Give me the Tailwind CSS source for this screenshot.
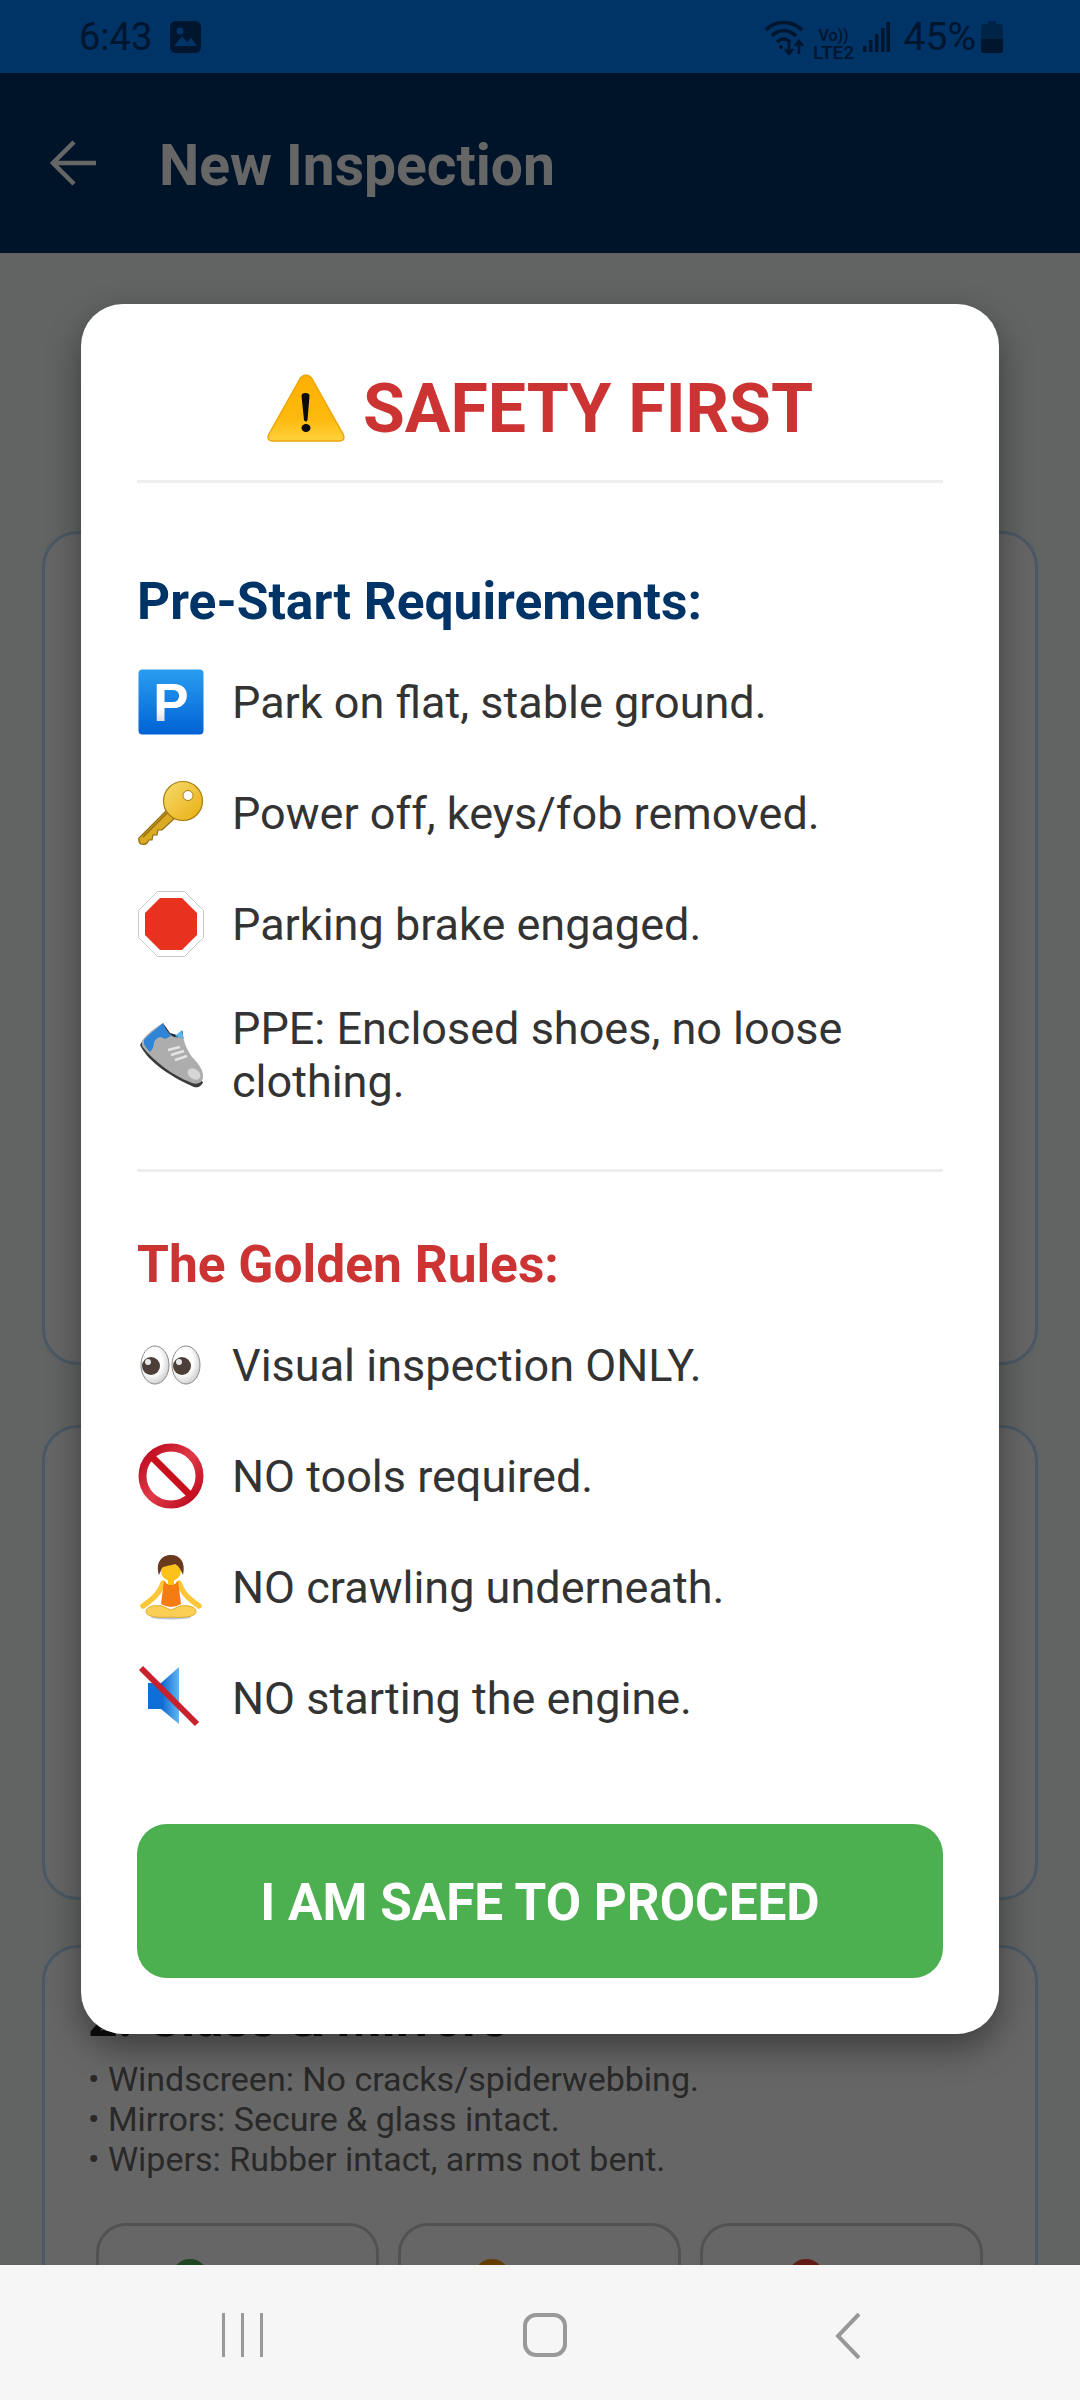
<!DOCTYPE html>
<html lang="en">
<head>
    <meta charset="UTF-8">
    <meta name="viewport" content="width=device-width, initial-scale=1.0">
    <title>New Inspection</title>
    <script src="https://cdn.jsdelivr.net/npm/@tailwindcss/browser@4"></script>
</head>
<body class="bg-[#f6f7f8] font-[Roboto,sans-serif]">
<div class="relative w-[1080px] h-[2400px] overflow-hidden flex flex-col">

    <!-- status bar -->
    <div class="h-[73px] bg-[#003366] flex items-center justify-between pl-[79px] pr-[77px] text-[#00152e] shrink-0">
        <div class="flex items-center gap-[18px]">
            <span class="text-[38px] leading-[44px]">6:43</span>
            <svg width="31" height="32" viewBox="0 0 31 32"><rect x="0" y="0" width="31" height="32" rx="6" fill="#00152e"/><circle cx="10" cy="10" r="3.5" fill="#003366"/><path d="M4 25 L12 15 L17 21 L21 17 L27 25 Z" fill="#003366"/></svg>
        </div>
        <div class="flex items-center">
            <svg width="40" height="36" viewBox="0 0 40 36" fill="none" stroke="#00152e" stroke-width="3.5"><path d="M2 11 C11 1 28 1 38 11"/><path d="M8 17 C14 10 25 10 32 17"/><path d="M13 23 C17 19 22 19 26 23"/><circle cx="17" cy="28" r="2" fill="#00152e" stroke="none"/><path d="M25 22 V35 M21 30 L25 35 L29 30" stroke-width="2.5"/><path d="M35 35 V23 M31 27 L35 22 L39 27" stroke-width="2.5"/></svg>
            <div class="ml-[9px] w-[42px] pt-[16px] flex flex-col items-center font-medium">
                <span class="text-[16px] leading-[17px]">Vo))</span>
                <span class="text-[19px] leading-[18px]">LTE2</span>
            </div>
            <svg class="ml-[8px]" width="27" height="30" viewBox="0 0 27 30" fill="#00152e"><rect x="0" y="24" width="3.5" height="6"/><rect x="6" y="18" width="3.5" height="12"/><rect x="12" y="12" width="3.5" height="18"/><rect x="18" y="6" width="3.5" height="24"/><rect x="23.5" y="0" width="3.5" height="30"/></svg>
            <span class="ml-[14px] text-[39px] leading-[44px]">45%</span>
            <svg class="ml-[5px]" width="22" height="32" viewBox="0 0 22 32"><path d="M7 0 H15 V3 H19 Q22 3 22 6 V29 Q22 32 19 32 H3 Q0 32 0 29 V6 Q0 3 3 3 H7 Z" fill="#002448"/><path d="M0 18 H22 V29 Q22 32 19 32 H3 Q0 32 0 29 Z" fill="#00152e"/></svg>
        </div>
    </div>

    <!-- header -->
    <div class="h-[180px] bg-[#003366] flex items-center shrink-0 pl-[50px]">
        <svg width="46" height="46" viewBox="0 0 46 46" fill="none" stroke="#fff" stroke-width="4.5"><path d="M24 2 L3 23 L24 44"/><path d="M3 23 H46"/></svg>
        <span class="ml-[63px] pt-[6px] text-[57px] font-bold text-white leading-[64px]">New Inspection</span>
    </div>

    <!-- page behind the dialog -->
    <div class="flex-1 overflow-hidden px-[42px] pt-[278px] flex flex-col gap-[60px]">
        <div class="h-[834px] shrink-0 bg-white rounded-[36px] border-[3px] border-[#bbdefb]"></div>
        <div class="h-[475px] shrink-0 bg-white rounded-[36px] border-[3px] border-[#bbdefb] -mb-[15px]"></div>
        <div class="shrink-0 bg-white rounded-[36px] border-[3px] border-[#bbdefb] pt-[42px] px-[43px]">
            <h3 class="text-[52px] leading-[58px] font-bold text-[#222222]">2. Glass &amp; Mirrors</h3>
            <div class="mt-[11px] text-[34px] leading-[40px] text-[#666666]">
                <p>• Windscreen: No cracks/spiderwebbing.</p>
                <p>• Mirrors: Secure &amp; glass intact.</p>
                <p>• Wipers: Rubber intact, arms not bent.</p>
            </div>
            <div class="mt-[44px] flex gap-[19px] pl-[8px]">
                <div class="w-[283px] h-[200px] shrink-0 rounded-[30px] border-[3px] border-[#cccccc] pt-[33px] pl-[73px]"><div class="w-[36px] h-[36px] rounded-full bg-[#4caf50]"></div></div>
                <div class="w-[283px] h-[200px] shrink-0 rounded-[30px] border-[3px] border-[#cccccc] pt-[33px] pl-[73px]"><div class="w-[36px] h-[36px] rounded-full bg-[#ff9800]"></div></div>
                <div class="w-[283px] h-[200px] shrink-0 rounded-[30px] border-[3px] border-[#cccccc] pt-[33px] pl-[85px]"><div class="w-[36px] h-[36px] rounded-full bg-[#f44336]"></div></div>
            </div>
        </div>
    </div>

    <!-- dim + dialog -->
    <div class="absolute left-0 top-[73px] w-[1080px] h-[2192px] bg-black/60 pt-[231px] px-[81px]">
        <div class="bg-white rounded-[42px] h-[1730px] px-[56px] pt-[62px] shadow-[0_14px_34px_rgba(0,0,0,0.4)]">
            <div class="h-[84px] flex items-center justify-center gap-[18px]">
                <svg width="78" height="68" viewBox="0 0 78 68">
                    <defs><linearGradient id="warn" x1="0" y1="0" x2="0" y2="1"><stop offset="0" stop-color="#ffb000"/><stop offset="0.65" stop-color="#fdb90d"/><stop offset="1" stop-color="#ffd23c"/></linearGradient></defs>
                    <path d="M33.5 4 Q39 -2 44.5 4 L76 60 Q79 67 72 67 H6 Q-1 67 2 60 Z" fill="url(#warn)" stroke="#eda508" stroke-width="1.5"/>
                    <path d="M34.5 22 Q34.5 19 38.5 19 Q42.5 19 42.5 22 L40.5 46 Q39 49 37 46 Z" fill="#0b0b0b"/>
                    <ellipse cx="39" cy="54" rx="4.5" ry="4" fill="#0b0b0b"/>
                </svg>
                <h2 class="pt-[2px] text-[68px] leading-[84px] font-bold text-[#cc3333]">SAFETY FIRST</h2>
            </div>
            <div class="mt-[30px] h-[3px] bg-[#eeeeee]"></div>

            <h3 class="mt-[89px] text-[51.5px] leading-[60px] font-bold text-[#003366]">Pre-Start Requirements:</h3>
            <ul class="mt-[37px] flex flex-col gap-[45px] text-[45px] leading-[53px] text-[#333333]">
                <li class="flex items-center min-h-[66px] gap-[28px]">
                    <svg class="shrink-0 ml-[1px]" width="66" height="66" viewBox="0 0 66 66">
                        <defs><linearGradient id="pk" x1="0" y1="0" x2="0" y2="1"><stop offset="0" stop-color="#2a9df0"/><stop offset="1" stop-color="#0062d6"/></linearGradient><linearGradient id="pw" x1="0" y1="0" x2="0" y2="1"><stop offset="0.6" stop-color="#ffffff"/><stop offset="1" stop-color="#b9c4d2"/></linearGradient></defs>
                        <rect x="0.5" y="0.5" width="65" height="65" rx="4" fill="url(#pk)"/>
                        <text x="33" y="52" text-anchor="middle" font-family="Liberation Sans" font-weight="700" font-size="53" fill="url(#pw)">P</text>
                    </svg>
                    <span>Park on flat, stable ground.</span>
                </li>
                <li class="flex items-center min-h-[66px] gap-[28px]">
                    <svg class="shrink-0 ml-[1px]" width="66" height="66" viewBox="0 0 66 66">
                        <defs><linearGradient id="ky" x1="0" y1="0" x2="1" y2="1"><stop offset="0" stop-color="#f7dc6c"/><stop offset="1" stop-color="#e8ad12"/></linearGradient></defs>
                        <path d="M31 28 L1 58 Q0 62 3 64 Q7 65 9 63 L11 60 L14 60 L15 55 L19 55 L20 50 L24 50 L38 37 Z" fill="#d9aa22" stroke="#8f6c10" stroke-width="1.2"/>
                        <path d="M5 57 L29 33" stroke="#8f6c10" stroke-width="1.5"/>
                        <circle cx="45" cy="21" r="19.5" fill="url(#ky)" stroke="#a67d12" stroke-width="1.2"/>
                        <circle cx="50" cy="15.5" r="5" fill="#fff" stroke="#a67d12" stroke-width="1"/>
                    </svg>
                    <span>Power off, keys/fob removed.</span>
                </li>
                <li class="flex items-center min-h-[66px] gap-[28px]">
                    <svg class="shrink-0 ml-[1px]" width="66" height="66" viewBox="0 0 66 66">
                        <path d="M19.5 0.5 H46.5 L65.5 19.5 V46.5 L46.5 65.5 H19.5 L0.5 46.5 V19.5 Z" fill="#fff" stroke="#c9c9c9" stroke-width="1"/>
                        <path d="M22 7 H44 L59 22 V44 L44 59 H22 L7 44 V22 Z" fill="#e8321f"/>
                    </svg>
                    <span>Parking brake engaged.</span>
                </li>
                <li class="flex items-center min-h-[66px] gap-[28px]">
                    <svg class="shrink-0 ml-[1px]" width="66" height="66" viewBox="0 0 66 66">
                        <path d="M2 23 C8 36 26 52 56 65 C60 66 64 64 65 60 L62 58 C40 54 16 38 5 18 Z" fill="#3b3b3b"/>
                        <path d="M4 19 C8 13 15 7 25 1 C27 7 31 13 36 15 C40 16 43 15 45 14 C46 21 49 28 54 35 C60 41 66 48 65 56 C64 62 57 63 52 60 C36 54 16 40 4 24 Z" fill="#adadad"/>
                        <path d="M6 18 C10 13 17 8 25 1 C27 7 30 11 33 14 L27 17 C22 14 19 15 16 20 C16 25 14 28 12 30 C9 27 7 24 6 22 Z" fill="#2e84d6"/>
                        <path d="M25 1 C27 7 31 13 36 15 C40 16 43 15 45 14 L45 9 L39 13 L32 11 Z" fill="#1c2b3a"/>
                        <path d="M37 14 L44 8 L46 17 Z" fill="#58b4e8"/>
                        <path d="M30 28 L42 25 M33 33 L46 29 M37 38 L49 34" stroke="#e4e4e4" stroke-width="2.5" fill="none"/>
                        <ellipse cx="56" cy="52" rx="7" ry="5" transform="rotate(35 56 52)" fill="#d6d6d6"/>
                    </svg>
                    <span>PPE: Enclosed shoes, no loose clothing.</span>
                </li>
            </ul>

            <div class="mt-[61px] h-[3px] bg-[#eeeeee]"></div>

            <h3 class="mt-[63px] text-[51.5px] leading-[60px] font-bold text-[#cc3333]">The Golden Rules:</h3>
            <ul class="mt-[37px] flex flex-col gap-[45px] text-[45px] leading-[53px] text-[#333333]">
                <li class="flex items-center min-h-[66px] gap-[28px]">
                    <svg class="shrink-0 ml-[1px]" width="66" height="66" viewBox="0 0 66 66">
                        <defs><radialGradient id="ey" cx="0.4" cy="0.4" r="0.7"><stop offset="0.5" stop-color="#ffffff"/><stop offset="1" stop-color="#c4c4c4"/></radialGradient></defs>
                        <ellipse cx="17" cy="33" rx="14" ry="19" fill="url(#ey)" stroke="#8a8a8a" stroke-width="1"/>
                        <ellipse cx="48" cy="33" rx="14" ry="19" fill="url(#ey)" stroke="#8a8a8a" stroke-width="1"/>
                        <circle cx="13" cy="34" r="9" fill="#4b3f38"/>
                        <circle cx="44" cy="34" r="9" fill="#4b3f38"/>
                        <circle cx="10" cy="30" r="3" fill="#e8e8e8"/>
                        <circle cx="41" cy="30" r="3" fill="#e8e8e8"/>
                    </svg>
                    <span>Visual inspection ONLY.</span>
                </li>
                <li class="flex items-center min-h-[66px] gap-[28px]">
                    <svg class="shrink-0 ml-[1px]" width="66" height="66" viewBox="0 0 66 66">
                        <defs><linearGradient id="no" x1="0" y1="0" x2="1" y2="1"><stop offset="0" stop-color="#b8061a"/><stop offset="0.5" stop-color="#e03a48"/><stop offset="1" stop-color="#b8061a"/></linearGradient></defs>
                        <circle cx="33" cy="33" r="28.5" fill="#fff" stroke="url(#no)" stroke-width="8"/>
                        <path d="M13 13 L53 53" stroke="#c8101f" stroke-width="7"/>
                    </svg>
                    <span>NO tools required.</span>
                </li>
                <li class="flex items-center min-h-[66px] gap-[28px]">
                    <svg class="shrink-0 ml-[1px]" width="66" height="66" viewBox="0 0 66 66">
                        <ellipse cx="33" cy="63" rx="20" ry="2.5" fill="#b7c4d8"/>
                        <path d="M8 58 C8 52 16 51 24 52 L33 56 L42 52 C50 51 58 52 58 58 C58 63 44 64 33 63 C22 64 8 63 8 58 Z" fill="#f9cf55" stroke="#e6ad2a" stroke-width="1"/>
                        <path d="M25 29 C21 41 12 47 5 52 M41 29 C45 41 54 47 61 52" stroke="#fbc737" stroke-width="5.5" fill="none" stroke-linecap="round"/>
                        <path d="M26 27 L29 30 H37 L40 27 L43 50 Q33 56 23 50 Z" fill="#f57c12"/>
                        <circle cx="33" cy="17" r="10" fill="#fcc21b"/>
                        <path d="M21 21 C17 8 24 1 33 1 C42 1 48 8 45 21 C43 16 41 12 37 10 C31 12 26 12 24 14 Z" fill="#6a3a1c"/>
                        <rect x="30" y="25" width="6" height="6" fill="#fcc21b"/>
                    </svg>
                    <span>NO crawling underneath.</span>
                </li>
                <li class="flex items-center min-h-[66px] gap-[28px]">
                    <svg class="shrink-0 ml-[1px]" width="66" height="66" viewBox="0 0 66 66">
                        <defs><linearGradient id="sp" x1="0" y1="0" x2="1" y2="0"><stop offset="0" stop-color="#0c66cf"/><stop offset="1" stop-color="#62b6f2"/></linearGradient></defs>
                        <path d="M10 18 H23 V44 H10 Z" fill="#0f6fd8"/>
                        <path d="M23 18 L41 2 V59 L23 44 Z" fill="url(#sp)"/>
                        <path d="M3 3 L59 59" stroke="#c8202c" stroke-width="6"/>
                    </svg>
                    <span>NO starting the engine.</span>
                </li>
            </ul>

            <button class="mt-[93px] w-full h-[154px] pt-[5px] rounded-[30px] bg-[#4caf50] text-white text-[51.3px] font-bold">I AM SAFE TO PROCEED</button>
        </div>
    </div>

    <!-- nav bar -->
    <div class="relative z-10 h-[135px] bg-[#f6f6f6] shrink-0 flex items-start pt-[48px]">
        <div class="ml-[222px] w-[41px] h-[44px] flex justify-between">
            <div class="w-[3px] h-full bg-[#999999]"></div>
            <div class="w-[3px] h-full bg-[#999999]"></div>
            <div class="w-[3px] h-full bg-[#999999]"></div>
        </div>
        <div class="ml-[260px] w-[44px] h-[44px] rounded-[13px] border-[4px] border-[#999999]"></div>
        <svg class="ml-[268px]" width="26" height="46" viewBox="0 0 26 46" fill="none" stroke="#999999" stroke-width="4"><path d="M24 1 L3 23 L24 45"/></svg>
    </div>
</div>
</body>
</html>
